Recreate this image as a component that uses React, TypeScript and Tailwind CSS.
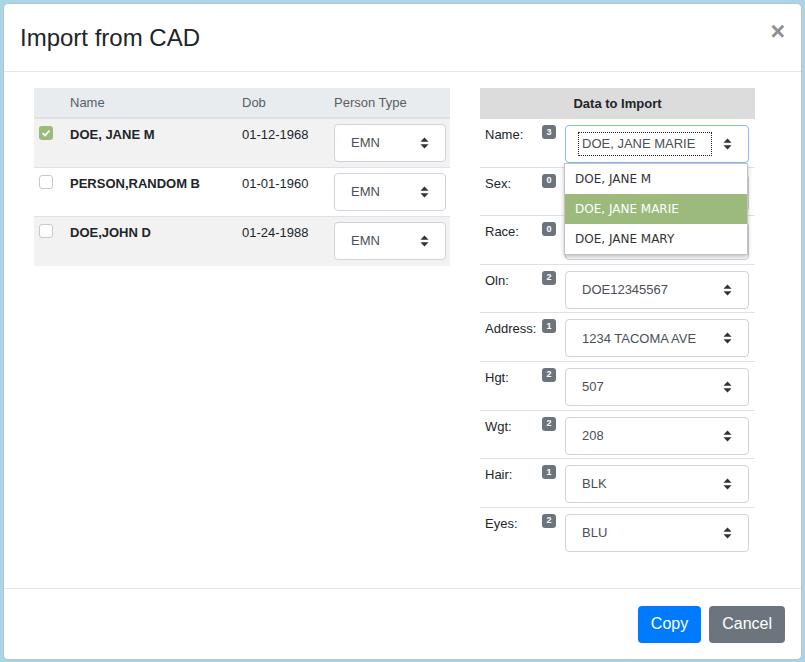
import React from 'react'

const people = [
  { name: 'DOE, JANE M', dob: '01-12-1968', checked: true, shade: true },
  { name: 'PERSON,RANDOM B', dob: '01-01-1960', checked: false, shade: false },
  { name: 'DOE,JOHN D', dob: '01-24-1988', checked: false, shade: true },
]

const fields = [
  { label: 'Name:', count: 3, value: 'DOE, JANE MARIE' },
  { label: 'Sex:', count: 0, value: '' },
  { label: 'Race:', count: 0, value: '' },
  { label: 'Oln:', count: 2, value: 'DOE12345567' },
  { label: 'Address:', count: 1, value: '1234 TACOMA AVE' },
  { label: 'Hgt:', count: 2, value: '507' },
  { label: 'Wgt:', count: 2, value: '208' },
  { label: 'Hair:', count: 1, value: 'BLK' },
  { label: 'Eyes:', count: 2, value: 'BLU' },
]

function Arrows() {
  return (
    <svg width="9" height="12" viewBox="0 0 9 12" className="shrink-0">
      <path d="M4.5 0.5 L8.5 4.8 L0.5 4.8 Z" fill="#333" />
      <path d="M4.5 11.5 L8.5 7.2 L0.5 7.2 Z" fill="#333" />
    </svg>
  )
}

function Select({ value, width, focused }: { value: string; width: string; focused?: boolean }) {
  return (
    <div
      className={`${width} h-[38px] rounded-[4px] border bg-white flex items-center pl-[16px] pr-[16px] ${
        focused ? 'border-[#80bdff]' : 'border-[#ced4da]'
      }`}
    >
      {focused ? (
        <span className="flex-1 mr-[11px] -ml-[4px] border border-dotted border-[#222] px-[3px] h-[24px] flex items-center text-[13px] text-[#495057]">
          {value}
        </span>
      ) : (
        <span className="flex-1 text-[13px] text-[#495057]">{value}</span>
      )}
      <Arrows />
    </div>
  )
}

function Checkbox({ checked }: { checked: boolean }) {
  if (checked) {
    return (
      <div className="w-[14px] h-[14px] rounded-[3px] bg-[#9bbb7b] flex items-center justify-center">
        <svg width="10" height="10" viewBox="0 0 10 10">
          <path d="M1.5 5.2 L4 7.5 L8.5 2.5" stroke="#fff" strokeWidth="1.8" fill="none" />
        </svg>
      </div>
    )
  }
  return <div className="w-[14px] h-[14px] rounded-[3px] bg-white border border-[#c8c8c8]" />
}

export default function App() {
  return (
    <div
      className="w-[805px] h-[662px] bg-[#a9d5e4] pt-[3px] pl-[3px]"
      style={{ fontFamily: '"Liberation Sans", Arial, sans-serif' }}
    >
      <div className="w-[799px] h-[657px] bg-white border border-[#b9c4c9] rounded-[5px] flex flex-col text-[#212529]">
        {/* header */}
        <div className="h-[68px] border-b border-[#e5e5e5] flex items-center justify-between pl-[16px] pr-[16px] shrink-0">
          <h5 className="text-[24px] leading-[28px] pt-[1px]">Import from CAD</h5>
          <span className="text-[25px] font-bold text-[#8f8f8f] leading-none -mt-[12px] mr-[0px]">×</span>
        </div>

        {/* body */}
        <div className="flex-1 flex pt-[16px] pl-[30px]">
          {/* people table */}
          <div className="w-[416px]">
            <div className="h-[31px] bg-[#e9ecef] border-b-2 border-[#dee2e6] flex items-center text-[13px] text-[#585e64]">
              <div className="w-[36px]" />
              <div className="w-[172px]">Name</div>
              <div className="w-[92px]">Dob</div>
              <div>Person Type</div>
            </div>
            {people.map((p, i) => (
              <div
                key={i}
                className={`h-[49px] flex items-start ${i < people.length - 1 ? 'border-b border-[#dee2e6]' : ''} ${
                  p.shade ? 'bg-[#f2f2f2]' : 'bg-white'
                }`}
              >
                <div className="w-[36px] pl-[5px] pt-[7px]">
                  <Checkbox checked={p.checked} />
                </div>
                <div className="w-[172px] pt-[6px] text-[13px] font-bold">{p.name}</div>
                <div className="w-[92px] pt-[6px] text-[13px]">{p.dob}</div>
                <div className="pt-[5px]">
                  <Select value="EMN" width="w-[112px]" />
                </div>
              </div>
            ))}
          </div>

          {/* data to import */}
          <div className="w-[275px] ml-[30px]">
            <div className="h-[31px] bg-[#dcdcdc] flex items-center justify-center text-[13px] font-bold">
              Data to Import
            </div>
            {fields.map((f, i) => (
              <div
                key={f.label}
                className={`relative h-[48.6px] flex items-start ${i < fields.length - 1 ? 'border-b border-[#dee2e6]' : ''}`}
              >
                <div className="w-[62px] pl-[5px] pt-[6px] text-[13px] whitespace-nowrap">{f.label}</div>
                <div className="w-[23px] pt-[6px]">
                  <div className="w-[14px] h-[14px] rounded-[3px] bg-[#6c757d] text-white text-[9px] font-bold flex items-center justify-center leading-none">
                    {f.count}
                  </div>
                </div>
                <div className="pt-[6px]">
                  <Select value={f.value} width="w-[184px]" focused={i === 0} />
                </div>
                {i === 0 && (
                  <div
                    className="absolute left-[84px] top-[44px] w-[184px] bg-white border border-[#c4c4c4] shadow-[0_2px_4px_rgba(0,0,0,0.25)] z-10 text-[12px] text-[#333]"
                    style={{ fontFamily: '"DejaVu Sans", sans-serif' }}
                  >
                    <div className="h-[30px] flex items-center pl-[10px]">DOE, JANE M</div>
                    <div className="h-[30px] flex items-center pl-[10px] bg-[#9bba7c] text-white">DOE, JANE MARIE</div>
                    <div className="h-[30px] flex items-center pl-[10px]">DOE, JANE MARY</div>
                  </div>
                )}
              </div>
            ))}
          </div>
        </div>

        {/* footer */}
        <div className="h-[71px] border-t border-[#e5e5e5] flex items-center justify-end gap-[8px] pr-[16px] shrink-0">
          <button className="h-[37px] px-[13px] rounded-[4px] bg-[#007bff] text-white text-[16px]">Copy</button>
          <button className="h-[37px] px-[13px] rounded-[4px] bg-[#6c757d] text-white text-[16px]">Cancel</button>
        </div>
      </div>
    </div>
  )
}
